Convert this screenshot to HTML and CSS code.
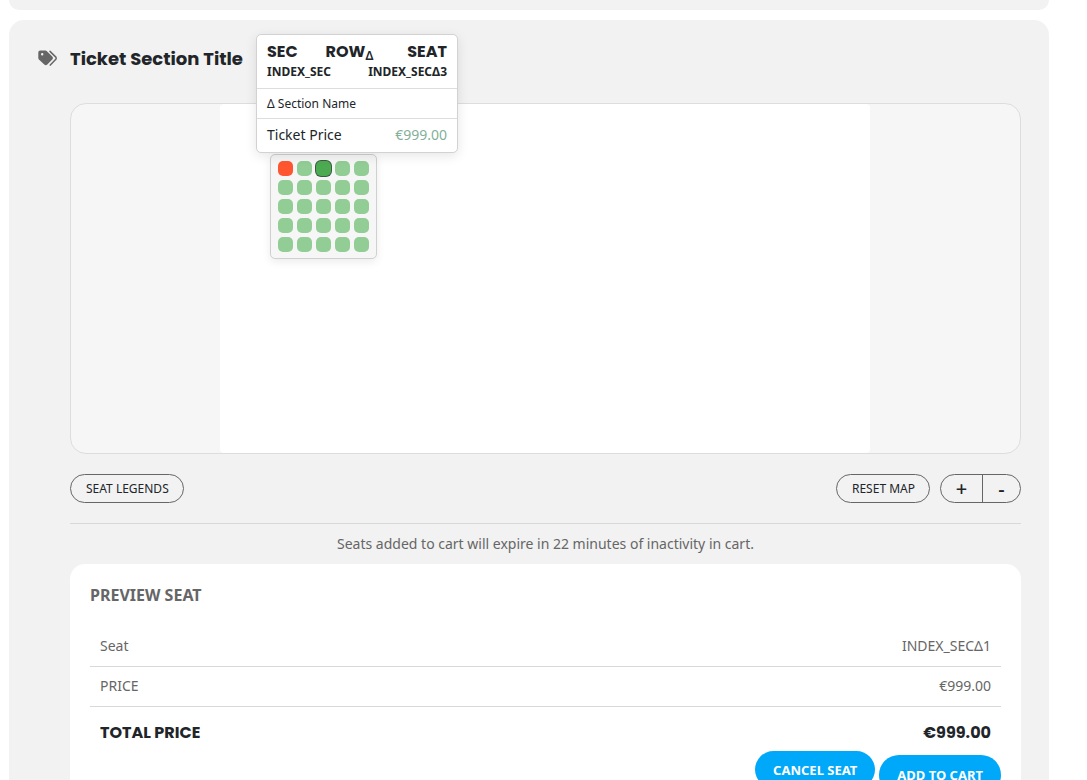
FILE: index.html
```html
<!DOCTYPE html>
<html lang="en">
<head>
<meta charset="utf-8">
<title>Ticket Section Title</title>
<meta name="viewport" content="width=device-width, initial-scale=1">
<link rel="stylesheet" href="styles.css">
</head>
<body>
<main class="page">
  <div class="card card-previous"></div>
  <section class="card tickets">
    <header class="tickets-header">
      <svg class="tag-icon" viewBox="0 0 20 18" aria-hidden="true">
        <path fill="#666" fill-rule="evenodd" d="M.3 2.500A1.900 1.900 0 0 1 2.200 .6h5.200c.6 0 1.100.2 1.500.6l5.400 5.200a2.100 2.100 0 0 1 0 3l-5 5.200a2.100 2.100 0 0 1-3 0L.9 9.400A2 2 0 0 1 .3 8zM3 4.300a1.200 1.200 0 1 0 2.400 0a1.200 1.200 0 1 0-2.400 0z"/>
        <path fill="none" stroke="#666" stroke-width="1.500" stroke-linecap="round" d="M12 1.400l5.600 5.500a1.900 1.900 0 0 1 0 2.700l-5.300 5.500"/>
      </svg>
      <h2 class="tickets-title">Ticket Section Title</h2>
    </header>

    <div class="map">
      <div class="map-canvas">
        <div class="seat-block">
          <button class="seat seat-selected" aria-label="Seat 1"></button>
          <button class="seat" aria-label="Seat 2"></button>
          <button class="seat seat-hover" aria-label="Seat 3"></button>
          <button class="seat" aria-label="Seat 4"></button>
          <button class="seat" aria-label="Seat 5"></button>
          <button class="seat" aria-label="Seat 6"></button>
          <button class="seat" aria-label="Seat 7"></button>
          <button class="seat" aria-label="Seat 8"></button>
          <button class="seat" aria-label="Seat 9"></button>
          <button class="seat" aria-label="Seat 10"></button>
          <button class="seat" aria-label="Seat 11"></button>
          <button class="seat" aria-label="Seat 12"></button>
          <button class="seat" aria-label="Seat 13"></button>
          <button class="seat" aria-label="Seat 14"></button>
          <button class="seat" aria-label="Seat 15"></button>
          <button class="seat" aria-label="Seat 16"></button>
          <button class="seat" aria-label="Seat 17"></button>
          <button class="seat" aria-label="Seat 18"></button>
          <button class="seat" aria-label="Seat 19"></button>
          <button class="seat" aria-label="Seat 20"></button>
          <button class="seat" aria-label="Seat 21"></button>
          <button class="seat" aria-label="Seat 22"></button>
          <button class="seat" aria-label="Seat 23"></button>
          <button class="seat" aria-label="Seat 24"></button>
          <button class="seat" aria-label="Seat 25"></button>
        </div>
        <div class="tooltip" role="tooltip">
          <div class="tooltip-head">
            <div class="tooltip-line tooltip-labels">
              <span>SEC</span>
              <span class="row-label">ROW<span class="row-value">Δ</span></span>
              <span>SEAT</span>
            </div>
            <div class="tooltip-line tooltip-values">
              <span>INDEX_SEC</span>
              <span>INDEX_SECΔ3</span>
            </div>
          </div>
          <div class="tooltip-section">Δ Section Name</div>
          <div class="tooltip-line tooltip-price">
            <span>Ticket Price</span>
            <span class="price">€999.00</span>
          </div>
        </div>
      </div>
    </div>

    <div class="controls">
      <button class="pill">SEAT LEGENDS</button>
      <div class="controls-right">
        <button class="pill">RESET MAP</button>
        <div class="zoom">
          <button class="zoom-button zoom-in" aria-label="Zoom in">+</button>
          <button class="zoom-button" aria-label="Zoom out">-</button>
        </div>
      </div>
    </div>

    <p class="notice">Seats added to cart will expire in 22 minutes of inactivity in cart.</p>

    <div class="preview">
      <h3 class="preview-title">PREVIEW SEAT</h3>
      <table class="summary">
        <tbody>
          <tr><th scope="row">Seat</th><td>INDEX_SECΔ1</td></tr>
          <tr><th scope="row">PRICE</th><td>€999.00</td></tr>
          <tr class="total"><th scope="row">TOTAL PRICE</th><td>€999.00</td></tr>
        </tbody>
      </table>
      <div class="actions">
        <button class="action cancel">CANCEL SEAT</button>
        <button class="action add">ADD TO CART</button>
      </div>
    </div>
  </section>
</main>
</body>
</html>
```
FILE: styles.css
```css
* { box-sizing: border-box; }

body {
  margin: 0;
  background: #fff;
  color: #212529;
  font: 14px/20px "Noto Sans", sans-serif;
}

button {
  margin: 0;
  padding: 0;
  color: inherit;
  font: inherit;
  cursor: pointer;
}

.page {
  display: flex;
  flex-direction: column;
  gap: 10px;
  height: 100vh;
  padding: 0 38px 0 9px;
  overflow: hidden;
}

.card {
  flex: none;
  border-radius: 15px;
  background: #f2f2f2;
}

.card-previous {
  height: 10px;
  border-radius: 0 0 15px 15px;
}

.tickets { padding: 25px 28px 30px 61px; }

.tickets-header {
  display: flex;
  align-items: center;
  gap: 12px;
  height: 28px;
  margin: 0 0 30px -32px;
}

.tag-icon {
  width: 20px;
  height: 18px;
}

.tickets-title {
  margin: 0;
  font: 700 18px/28px Poppins, Inter, sans-serif;
}

.map {
  display: flex;
  justify-content: center;
  padding-right: 1px;
  border: 1px solid #ddd;
  border-radius: 16px;
  background: #f6f6f6;
}

.map-canvas {
  position: relative;
  width: 650px;
  height: 349px;
  border-radius: 4px;
  background: #fff;
}

.seat-block {
  position: absolute;
  top: 50px;
  left: 50px;
  display: grid;
  grid-template-columns: repeat(5, 15px);
  gap: 4px;
  padding: 6px 7px;
  border: 1px solid #d0d0d0;
  border-radius: 5px;
  background: #f6f6f6;
  box-shadow: 0 3px 8px rgba(0, 0, 0, .08);
}

.seat {
  width: 15px;
  height: 15px;
  border: 0;
  border-radius: 5px;
  background: #91cd94;
}

.seat-selected { background: #ff5630; }

.seat-hover {
  background: #4caa50;
  box-shadow: 0 0 0 1px #3c5a44;
}

.tooltip {
  position: absolute;
  top: -70px;
  left: 36px;
  width: 202px;
  border: 1px solid #d2d2d2;
  border-radius: 5px;
  background: #fff;
  box-shadow: 0 3px 12px rgba(0, 0, 0, .1);
}

.tooltip-line {
  display: flex;
  justify-content: space-between;
}

.tooltip-head {
  padding: 7px 10px;
  border-bottom: 1px solid #ddd;
}

.tooltip-labels { font: 700 16px/20px Poppins, Inter, sans-serif; }

.row-label {
  display: flex;
  align-items: flex-end;
  margin-right: 6px;
}

.row-value {
  font: 600 12px/13px "Noto Sans", sans-serif;
}

.tooltip-values { font: 700 12px/19px "Noto Sans", sans-serif; }

.tooltip-section {
  padding: 5px 10px 4px;
  border-bottom: 1px solid #ddd;
  font-size: 12px;
}

.tooltip-price { padding: 6px 10px 7px; }

.price { color: #84b09a; }

.controls {
  display: flex;
  align-items: center;
  justify-content: space-between;
  padding: 20px 0;
  border-bottom: 1px solid #d8d8d8;
}

.controls-right {
  display: flex;
  gap: 10px;
}

.pill {
  height: 29px;
  padding: 0 14px 0 15px;
  border: 1px solid #666;
  border-radius: 15px;
  background: transparent;
  font-size: 12px;
  line-height: 27px;
}

.zoom {
  display: flex;
  border: 1px solid #666;
  border-radius: 15px;
}

.zoom-button {
  width: 37px;
  height: 27px;
  border: 0;
  background: transparent;
  font-size: 20px;
  font-weight: 500;
}

.zoom-in {
  width: 42px;
  border-right: 1px solid #666;
}

.notice {
  margin: 10px 0;
  color: #666;
  text-align: center;
}

.preview {
  padding: 20px 20px 30px;
  border-radius: 15px;
  background: #fff;
}

.preview-title {
  margin: 0 0 20px;
  color: #666;
  font-size: 16px;
  font-weight: 700;
  line-height: 22px;
}

.summary {
  width: 100%;
  border-collapse: collapse;
  color: #666;
}

.summary th,
.summary td {
  height: 40px;
  padding: 0 10px;
  border-bottom: 1px solid #d8d8d8;
  font-weight: 400;
  text-align: left;
}

.summary td { text-align: right; }

.summary .total th,
.summary .total td {
  height: 45px;
  padding-top: 8px;
  border: 0;
  color: #212529;
  font: 700 16px/24px Poppins, Inter, sans-serif;
}

.actions {
  display: flex;
  justify-content: flex-end;
  align-items: flex-start;
  gap: 4px;
}

.action {
  height: 37px;
  padding: 0 18px;
  border: 0;
  border-radius: 20px;
  background: #00a8fa;
  color: #fff;
  font-size: 13px;
  font-weight: 700;
}

.add {
  height: 40px;
  margin-top: 4px;
}
```
